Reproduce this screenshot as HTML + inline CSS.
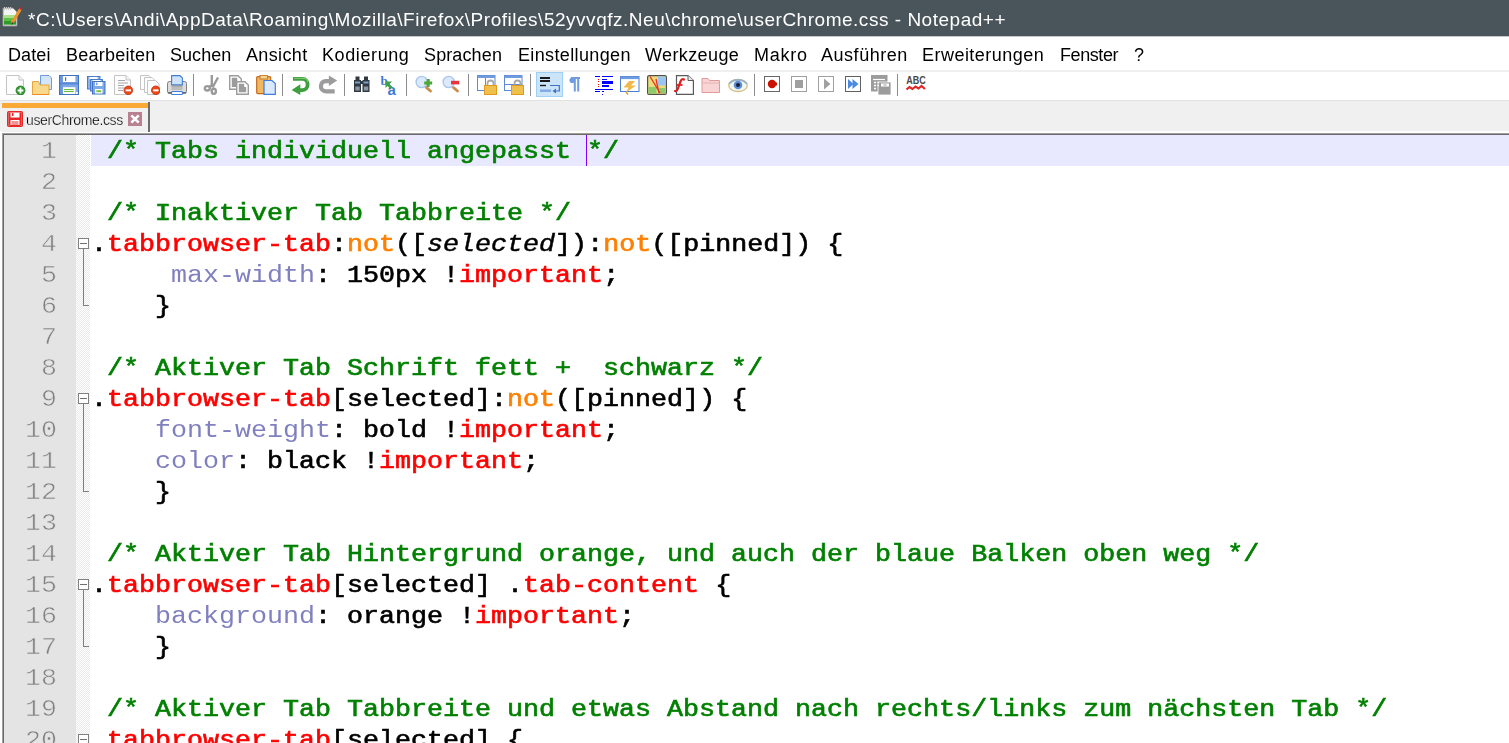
<!DOCTYPE html>
<html lang="de">
<head>
<meta charset="utf-8">
<title>userChrome.css - Notepad++</title>
<style>
html,body{margin:0;padding:0;}
body{width:1509px;height:743px;overflow:hidden;background:#fff;position:relative;font-family:"Liberation Sans",sans-serif;}
#title{position:absolute;left:0;top:0;width:1509px;height:36px;background:#4a545b;border-bottom:1px solid #c4c8cb;}
#title .t{will-change:transform;position:absolute;left:27.5px;top:7.5px;color:#fff;font-size:19px;line-height:24px;white-space:nowrap;letter-spacing:0.52px;}
#menu{position:absolute;left:0;top:37px;width:1509px;height:33px;background:#fff;}
#menu span{will-change:transform;position:absolute;top:7px;font-size:18px;line-height:22px;color:#000;white-space:nowrap;}
#tb{position:absolute;left:0;top:70px;width:1509px;height:30px;background:#fff;border-top:2px solid #f0f0f0;box-sizing:border-box;}
#tb .sep{position:absolute;top:2px;width:1px;height:22px;background:#8d8d8d;}
#tb svg{position:absolute;top:3px;width:20px;height:20px;}
#tabs{position:absolute;left:0;top:100px;width:1509px;height:31px;background:#f0f0f0;border-top:1px solid #e2e2e2;box-sizing:border-box;}
#tab{position:absolute;left:2px;top:2px;width:148px;height:29px;background:#f0f0f0;padding-top:5px;box-sizing:border-box;}
#tab:before{content:"";position:absolute;left:0;top:0;width:146px;height:5px;background:#faa836;}
#tab:after{content:"";position:absolute;left:146px;top:-1px;width:2px;height:30px;background:#6d6d6d;}
#tab .n{will-change:transform;-webkit-text-stroke:0.25px #f0f0f0;position:absolute;left:23.5px;top:8px;font-size:14px;letter-spacing:-0.36px;line-height:18px;color:#000;white-space:nowrap;}
#ed{position:absolute;left:2px;top:133px;width:1507px;height:610px;background:#fff;border-top:1px solid #a0a0a0;border-left:1px solid #a0a0a0;box-sizing:border-box;}
#ed2{position:absolute;left:0;top:0;width:1506px;height:609px;border-top:1px solid #696969;border-left:1px solid #696969;box-sizing:border-box;}
#lnm{position:absolute;left:0;top:0;width:72px;height:608px;background:#e4e4e4;}
#fm{position:absolute;left:72px;top:0;width:14px;height:608px;background:repeating-conic-gradient(#fff 0 25%,#e9e9e9 0 50%) 0 0/2px 2px;}
.fb{position:absolute;left:74px;width:11px;height:11px;box-sizing:border-box;border:1px solid #808080;background:#fff;}
.fb:after{content:"";position:absolute;left:1px;top:4px;width:7px;height:1px;background:#707070;}
.fl{position:absolute;left:79px;width:6px;border-left:1px solid #808080;border-bottom:1px solid #808080;box-sizing:border-box;}
#caret{position:absolute;left:582px;top:0;width:1px;height:31px;background:#8000ff;}
#cur{position:absolute;left:87px;top:0;width:1418px;height:31px;background:#e8e8ff;}
.ln{will-change:transform;position:absolute;left:0;width:53px;text-align:right;font-family:"Liberation Mono",monospace;font-size:23px;transform:scaleX(1.1594);transform-origin:100% 0;line-height:31px;height:31px;color:#808080;-webkit-text-stroke:0.55px #e4e4e4;}
.cl{will-change:transform;position:absolute;left:87px;height:31px;line-height:31px;font-family:"Liberation Mono",monospace;font-size:23px;letter-spacing:0px;transform:scaleX(1.1594);transform-origin:0 0;-webkit-text-stroke-width:0.6px;white-space:pre;color:#000;}
.cl i{-webkit-text-stroke-width:0.45px}.c{color:#008000}.r{color:#ff0000}.o{color:#ff8000}.p{color:#8080c0;-webkit-text-stroke-width:0}
</style>
</head>
<body>
<div id="title"><svg style="position:absolute;left:2px;top:6px;width:21px;height:21px" viewBox="0 0 21 21"><path d="M1 2H11L15 6V20H1Z" fill="#f4f4f4" stroke="#8a8a8a" stroke-width="1"/><path d="M2.5 1V4M4.500 1V4M6.500 1V4M8.500 1V4" stroke="#c8c8c8" stroke-width="1"/><rect x="2" y="9" width="12" height="9.500" fill="#5cc044"/><rect x="2" y="15" width="12" height="3.500" fill="#2f9a2a"/><rect x="2" y="9" width="12" height="3" fill="#a8e08c"/><path d="M18.500 3L10 17" stroke="#f0922c" stroke-width="3"/><path d="M19.300 1.500L18.200 3.500" stroke="#d02020" stroke-width="2"/><path d="M10.500 16L9 19L11.800 17.200Z" fill="#40382c"/></svg><span class="t">*C:\Users\Andi\AppData\Roaming\Mozilla\Firefox\Profiles\52yvvqfz.Neu\chrome\userChrome.css - Notepad++</span></div>
<div id="menu">
<span style="left:7.8px;letter-spacing:0.09px">Datei</span><span style="left:65.5px;letter-spacing:0.25px">Bearbeiten</span><span style="left:169.8px;letter-spacing:0.05px">Suchen</span><span style="left:245.8px;letter-spacing:0.36px">Ansicht</span><span style="left:322.3px;letter-spacing:0.60px">Kodierung</span><span style="left:424.0px;letter-spacing:0.12px">Sprachen</span><span style="left:517.5px;letter-spacing:0.36px">Einstellungen</span><span style="left:644.7px;letter-spacing:0.39px">Werkzeuge</span><span style="left:753.8px;letter-spacing:0.72px">Makro</span><span style="left:820.6px;letter-spacing:0.53px">Ausführen</span><span style="left:922.2px;letter-spacing:0.47px">Erweiterungen</span><span style="left:1060.0px;letter-spacing:-0.42px">Fenster</span><span style="left:1134px">?</span>
</div>
<div id="tb">
<div class="sep" style="left:193px"></div><div class="sep" style="left:282px"></div><div class="sep" style="left:344px"></div><div class="sep" style="left:406px"></div><div class="sep" style="left:468px"></div><div class="sep" style="left:530px"></div><div class="sep" style="left:754px"></div><div class="sep" style="left:897px"></div>
<!-- new -->
<svg style="left:6px" viewBox="0 0 20 20"><path d="M0.5 0.5H13L17.5 5V19.5H0.5Z" fill="#fdfdfd" stroke="#c4c4c4"/><path d="M13 0.5V5H17.5" fill="#f2f2f2" stroke="#c4c4c4"/><circle cx="14.5" cy="15.5" r="4.5" fill="#2e9a2e" stroke="#1f7a1f" stroke-width="0.8"/><path d="M14.5 12.6V18.4M11.6 15.5H17.4" stroke="#fff" stroke-width="1.8"/></svg>
<!-- open -->
<svg style="left:32px" viewBox="0 0 20 20"><path d="M8.5 0.5H17L19.5 3V14.5H8.5Z" fill="#d3e4fb" stroke="#6a9be0"/><path d="M0.5 6.5H6.5L8 10H17V19.5H0.5Z" fill="#f8d88a" stroke="#e6a63a"/><path d="M0.5 19.5H17" stroke="#f08a1c"/></svg>
<!-- save -->
<svg style="left:59px" viewBox="0 0 20 20"><rect x="0.500" y="0.500" width="19" height="19" fill="#7ea8e6" stroke="#3f72c4"/><rect x="1" y="1" width="2.500" height="18" fill="#6a98de"/><rect x="1" y="7.500" width="18" height="2" fill="#5a8ad8"/><rect x="4" y="1" width="12.400" height="6" fill="#fff"/><rect x="6" y="2.200" width="1.200" height="3.700" fill="#3f72c4"/><rect x="4" y="12.200" width="12.400" height="6.800" fill="#fff"/><rect x="5" y="14" width="9.800" height="1.100" fill="#6bbf3a"/><rect x="5" y="16" width="9.800" height="1.100" fill="#6bbf3a"/><rect x="17" y="17" width="1.800" height="1.900" fill="#fff"/></svg>
<!-- save all -->
<svg style="left:86px" viewBox="0 0 20 20"><rect x="1.500" y="1.500" width="12.500" height="12.500" fill="#8db2ea" stroke="#4a7bcc"/><rect x="3.500" y="2" width="8" height="2.500" fill="#fff"/><rect x="4.500" y="4.500" width="12" height="11.500" fill="#8db2ea" stroke="#4a7bcc"/><rect x="6.500" y="5" width="8" height="2" fill="#fff"/><rect x="6.500" y="6.500" width="12.500" height="12.500" fill="#7ea8e6" stroke="#3f72c4"/><rect x="9" y="7" width="7.500" height="4" fill="#fff"/><rect x="10.300" y="7.600" width="1" height="2.600" fill="#3f72c4"/><rect x="9" y="14" width="7.500" height="4.500" fill="#fff"/><rect x="10.300" y="15.200" width="5" height="2" fill="#7bc43c"/></svg>
<!-- close -->
<svg style="left:113px" viewBox="0 0 20 20"><path d="M1.5 0.5H13L17.5 5V19.5H1.5Z" fill="#fdfdfd" stroke="#c4c4c4"/><path d="M13 0.5V5H17.5" fill="#f2f2f2" stroke="#c4c4c4"/><path d="M5 5.5H12M5 8H15M5 10.5H11M5 13H11M5 15.5H10" stroke="#a8a8a8" stroke-width="1.1"/><circle cx="15.3" cy="15.3" r="4.3" fill="#e84a18" stroke="#c82a10" stroke-width="0.8"/><rect x="12.6" y="14.4" width="5.4" height="1.9" fill="#fff"/></svg>
<!-- close all -->
<svg style="left:140px" viewBox="0 0 20 20"><path d="M0.5 0.5H9L11 2.5V14.5H0.5Z" fill="#fdfdfd" stroke="#c4c4c4"/><path d="M4.5 2.5H12L14.5 5V17.5H4.5Z" fill="#fdfdfd" stroke="#c4c4c4"/><path d="M7.5 5.5H15.5L19 9V19.5H7.5Z" fill="#fdfdfd" stroke="#c4c4c4"/><circle cx="15.8" cy="15.3" r="4.3" fill="#e84a18" stroke="#c82a10" stroke-width="0.8"/><rect x="13.1" y="14.4" width="5.4" height="1.9" fill="#fff"/></svg>
<!-- print -->
<svg style="left:167px" viewBox="0 0 20 20"><rect x="0.500" y="6.500" width="19" height="12" rx="2" fill="#dcdcdc" stroke="#808080"/><rect x="1" y="17" width="18" height="1.400" fill="#6a6a6a"/><rect x="4.500" y="11" width="11" height="4" fill="#bcbcbc"/><rect x="4.500" y="10.300" width="11" height="1" fill="#8a8a8a"/><path d="M4.600 9.800V0.600H13L15.400 3V9.800Z" fill="#cfe3fc" stroke="#3f7fd8" stroke-width="1.100"/><rect x="4.600" y="16.500" width="10.800" height="3" rx="0.800" fill="#fafcff" stroke="#3f7fd8" stroke-width="1.100"/></svg>
<!-- cut -->
<svg style="left:203px" viewBox="0 0 20 20"><path d="M8.800 0V12M15 2.500L9.500 12.500" stroke="#9a9a9a" stroke-width="2.400" fill="none"/><ellipse cx="4.300" cy="13.300" rx="2.500" ry="2.200" fill="none" stroke="#9a9a9a" stroke-width="2.400"/><ellipse cx="10.800" cy="16.300" rx="2.100" ry="2.600" fill="none" stroke="#9a9a9a" stroke-width="2.400"/><path d="M6 12.200L10 10" stroke="#9a9a9a" stroke-width="2.600"/></svg>
<!-- copy -->
<svg style="left:229px" viewBox="0 0 20 20"><path d="M0.7 0.7H9L12.3 4V14.3H0.7Z" fill="#fff" stroke="#9c9c9c" stroke-width="1.4"/><path d="M2.8 2.8H8.2V6.5H10.2V12H2.8Z" fill="#9c9c9c"/><path d="M7.7 6.7H16L19.3 10V19.3H7.7Z" fill="#fff" stroke="#9c9c9c" stroke-width="1.4"/><path d="M9.8 8.8H15.2V12H17.2V17.3H9.8Z" fill="#9c9c9c"/></svg>
<!-- paste -->
<svg style="left:256px" viewBox="0 0 20 20"><rect x="0.7" y="1.7" width="14" height="17" rx="1" fill="#f0b860" stroke="#c06a20" stroke-width="1.2"/><rect x="4" y="0.5" width="7.5" height="3.5" fill="#f6d48c" stroke="#c06a20" stroke-width="0.8"/><path d="M8 5.5H16L19.3 8.5V19.3H8Z" fill="#dbe9fd" stroke="#3d7ee0" stroke-width="1.2"/></svg>
<!-- undo -->
<svg style="left:291px" viewBox="0 0 20 20"><path d="M2 3.900H11.500C18.300 3.900 18.300 15.200 11.500 15.200H8" fill="none" stroke="#3f9f3f" stroke-width="3.800"/><path d="M0.600 15L9.300 9.300V20Z" fill="#3f9f3f"/><path d="M3 3.300H12C15 3.300 16.500 5 16.800 7" fill="none" stroke="#86cc7a" stroke-width="1"/></svg>
<!-- redo -->
<svg style="left:318px" viewBox="0 0 20 20"><path d="M11.500 6.100H8C1.200 6.100 1.200 16.300 8 16.300H16.700" fill="none" stroke="#9c9c9c" stroke-width="4.200"/><path d="M19.200 5.600L10.900 0.600V11Z" fill="#9c9c9c"/></svg>
<!-- find -->
<svg style="left:353px" viewBox="0 0 20 20"><rect x="1" y="5" width="7" height="12" fill="#303840"/><rect x="9.500" y="5" width="7" height="12" fill="#303840"/><rect x="2.500" y="1.500" width="4" height="4" fill="#303840"/><rect x="11" y="1.500" width="4" height="4" fill="#303840"/><rect x="7" y="6" width="4" height="3" fill="#303840"/><rect x="2" y="6.500" width="5" height="2" fill="#7aa2c8"/><rect x="10.500" y="6.500" width="5" height="2" fill="#7aa2c8"/><rect x="2.300" y="11.500" width="4.400" height="4" fill="#8a98a6"/><rect x="10.800" y="11.500" width="4.400" height="4" fill="#8a98a6"/></svg>
<!-- replace -->
<svg style="left:380px" viewBox="0 0 20 20"><text x="0.500" y="9.500" font-family="Liberation Serif,serif" font-size="13" font-weight="bold" fill="#3f78d0">b</text><text x="7.500" y="19.500" font-family="Liberation Sans,sans-serif" font-size="15" font-weight="bold" fill="#3f78d0">a</text><path d="M5.500 6.500L12 6.500L9.500 9L12.500 12L10.500 14L7.500 11L5.500 13Z" fill="#3aa04a"/></svg>
<!-- zoom in -->
<svg style="left:415px" viewBox="0 0 20 20"><circle cx="6.700" cy="7" r="5.600" fill="#dce9fa" stroke="#a9c6ee" stroke-width="1.400"/><path d="M11.500 12.700L15.500 16" stroke="#c98a4a" stroke-width="2.800" stroke-linecap="round"/><path d="M13.200 4V12M9.200 8H17.200" stroke="#4aa83a" stroke-width="3"/></svg>
<!-- zoom out -->
<svg style="left:442px" viewBox="0 0 20 20"><circle cx="6.700" cy="7" r="5.600" fill="#dce9fa" stroke="#a9c6ee" stroke-width="1.400"/><path d="M11.500 12.700L15.500 16" stroke="#c98a4a" stroke-width="2.800" stroke-linecap="round"/><rect x="9" y="5.800" width="8.200" height="3.600" fill="#e8343a"/></svg>
<!-- sync v -->
<svg style="left:477px" viewBox="0 0 20 20"><rect x="0.5" y="0.5" width="17.5" height="15" fill="#fff" stroke="#5a8ad8"/><rect x="0.5" y="0.5" width="17.5" height="2.5" fill="#6f9ce0"/><path d="M8.5 3V15.5" stroke="#5a8ad8"/><path d="M10.5 11V8.5A3 3 0 0 1 16.5 8.500V11" fill="none" stroke="#a8a8a8" stroke-width="1.8"/><rect x="7.5" y="10.500" width="12" height="9" fill="#efc04c" stroke="#e09a20"/></svg>
<!-- sync h -->
<svg style="left:504px" viewBox="0 0 20 20"><rect x="0.500" y="0.500" width="17.500" height="15" fill="#fff" stroke="#5a8ad8"/><rect x="0.5" y="0.5" width="17.500" height="2.5" fill="#6f9ce0"/><path d="M0.5 9.500H18" stroke="#5a8ad8"/><path d="M10.500 11V8.500A3 3 0 0 1 16.5 8.5V11" fill="none" stroke="#a8a8a8" stroke-width="1.8"/><rect x="7.500" y="10.5" width="12" height="9" fill="#efc04c" stroke="#e09a20"/></svg>
<!-- wrap (active) -->
<div style="position:absolute;left:536px;top:0px;width:27px;height:25px;background:#cce4f7;border:1px solid #9fd0f5;box-sizing:border-box"></div>
<svg style="left:540px" viewBox="0 0 20 20"><path d="M0 3H10M0 6H10" stroke="#1a1a1a" stroke-width="1.8"/><path d="M0 10.500H6" stroke="#1a1a1a" stroke-width="1.4"/><rect x="0" y="14.500" width="11" height="2.400" fill="#7ea8e6"/><path d="M10 10.500H19.300V16H14" fill="none" stroke="#3f72c4" stroke-width="1.2"/><path d="M12.500 16L16 13.500V18.500Z" fill="#3f72c4"/></svg>
<!-- pilcrow -->
<svg style="left:566px" viewBox="0 0 20 20"><path d="M5 3H14M8.800 3V16.500M12.200 3V16.500" stroke="#6f9ce0" stroke-width="2" fill="none"/><circle cx="6.300" cy="5.300" r="2.800" fill="#6f9ce0"/></svg>
<!-- indent guide -->
<svg style="left:594px" viewBox="0 0 20 20" shape-rendering="crispEdges"><path d="M1 1.500H6M8 1.500H19" stroke="#0000ff" stroke-width="1"/><path d="M8 4.500H13" stroke="#0000ff" stroke-width="1"/><rect x="8" y="6" width="11" height="3" fill="#0000ff"/><rect x="8" y="10" width="7" height="2" fill="#0000ff"/><path d="M1 14.500H19" stroke="#0000ff" stroke-width="1"/><path d="M1 16.500H6M8 16.500H10" stroke="#0000ff" stroke-width="1"/><rect x="8" y="19" width="1" height="1" fill="#0000ff"/><path d="M4.500 4V13" stroke="#ff0000" stroke-width="1" stroke-dasharray="1 1.300"/></svg>
<!-- udl -->
<svg style="left:620px" viewBox="0 0 20 20"><rect x="0.500" y="1.500" width="18.500" height="15" fill="#fff" stroke="#4a80d8"/><rect x="0.500" y="1.500" width="18.500" height="2.600" fill="#6f9ce0"/><path d="M9 6L15 6L11 10.500L16 10.500L6 17.500L8.500 12.500L3.500 12.500Z" fill="#f0b848"/><path d="M6 17L8 19.500" stroke="#e0a030" stroke-width="1.500"/></svg>
<!-- doc map -->
<svg style="left:647px" viewBox="0 0 20 20"><rect x="0.600" y="0.600" width="18.800" height="18.800" rx="1.500" fill="#ecdc7c" stroke="#505050" stroke-width="1.200"/><rect x="11" y="1.500" width="7.500" height="9" fill="#9cc4f0"/><rect x="1.500" y="12" width="8" height="6.500" fill="#8ccc6c"/><rect x="12" y="13" width="6" height="5" fill="#8ccc6c"/><path d="M3 1.500L13 18M12 18L9 4" stroke="#e83020" stroke-width="1.300" fill="none"/></svg>
<!-- function list -->
<svg style="left:674px" viewBox="0 0 20 20"><path d="M2.500 0.600H14L19.400 5.500V19.400H2.500Z" fill="#fff" stroke="#5a5a5a" stroke-width="1.200"/><path d="M14 0.600V5.500H19.400" fill="#e8e8e8" stroke="#5a5a5a" stroke-width="1"/><path d="M1 16C3 16.500 4 14 4.800 11L6.500 6.500C7.300 4.500 8.500 3.500 10 4.500" fill="none" stroke="#e02020" stroke-width="2.200" stroke-linecap="round"/><path d="M2.500 10H8.500" stroke="#e02020" stroke-width="1.800"/></svg>
<!-- folder as workspace -->
<svg style="left:701px" viewBox="0 0 20 20"><path d="M1 3.500H7L8.500 5.500H18.500V17.500H1Z" fill="#f8d4d4" stroke="#e09a9a"/><path d="M1 8H18.500" stroke="#eab0b0"/></svg>
<!-- monitoring eye -->
<svg style="left:728px" viewBox="0 0 20 20"><ellipse cx="10" cy="10.500" rx="9.300" ry="6" fill="#f4f8ee" stroke="#d4c08c" stroke-width="1.300"/><path d="M1 9C5 3.500 15 3.500 19 9" fill="none" stroke="#9ab0c4" stroke-width="1.600"/><circle cx="10" cy="10" r="4.300" fill="#5a8ed8"/><circle cx="10" cy="10" r="2" fill="#182030"/></svg>
<!-- record -->
<svg style="left:763px" viewBox="0 0 20 20"><rect x="1.500" y="1.500" width="15" height="15" fill="#fff" stroke="#686868" stroke-width="1"/><circle cx="9" cy="9" r="4.200" fill="#cc1100"/><rect x="11" y="7.500" width="3" height="3" fill="#cc1100"/></svg>
<!-- stop -->
<svg style="left:790px" viewBox="0 0 20 20"><rect x="1.500" y="1.500" width="15" height="15" fill="#fff" stroke="#a0a0a0" stroke-width="1"/><rect x="5" y="5" width="8" height="8" fill="#a0a0a0"/></svg>
<!-- play -->
<svg style="left:817px" viewBox="0 0 20 20"><rect x="1.500" y="1.500" width="15" height="15" fill="#fff" stroke="#a0a0a0" stroke-width="1"/><path d="M7 3.500L13.500 9L7 14.500Z" fill="#a0a0a0"/></svg>
<!-- play multi -->
<svg style="left:844px" viewBox="0 0 20 20"><rect x="1.500" y="1.500" width="15" height="15" fill="#fff" stroke="#606060" stroke-width="1"/><path d="M4 4L9.500 9L4 14Z" fill="#4a8ae0"/><path d="M8.500 4L14.500 9L8.500 14Z" fill="#4a8ae0"/></svg>
<!-- save macro -->
<svg style="left:871px" viewBox="0 0 20 20"><rect x="0" y="0" width="16.500" height="16.500" fill="#9c9c9c"/><rect x="7" y="7" width="13" height="13" fill="#9c9c9c" stroke="#fff" stroke-width="0.800"/><path d="M2 4.500H14" stroke="#fff" stroke-width="1.200"/><path d="M3 7.500H5M3 10.500H5M3 13.500H5M6.500 7.500H8M6.500 10.500H8" stroke="#fff" stroke-width="1.400"/><rect x="10" y="8.500" width="8" height="3" fill="#fff"/><rect x="12.500" y="9.500" width="3" height="1" fill="#9c9c9c"/></svg>
<!-- spell check -->
<svg style="left:906px" viewBox="0 0 20 20"><text x="10" y="9.300" text-anchor="middle" font-family="Liberation Sans,sans-serif" font-size="11.500" font-weight="bold" fill="#484848" textLength="19.500" lengthAdjust="spacingAndGlyphs">ABC</text><path d="M0.500 14.500L3.500 12L6.500 14L9.500 11.500L12.500 13.500L15.500 11L19 14" fill="none" stroke="#e02828" stroke-width="2.200"/></svg>
</div>
<div id="tabs"><div id="tab"><svg style="position:absolute;left:5px;top:8px;width:16px;height:16px" viewBox="0 0 16 16"><rect x="0.75" y="0.75" width="14.5" height="14.5" rx="1" fill="#fff" stroke="#e82828" stroke-width="1.5"/><rect x="1.5" y="1.5" width="2" height="13" fill="#e82828"/><rect x="12.500" y="1.500" width="2" height="13" fill="#e82828"/><rect x="3" y="6.500" width="10" height="2.500" fill="#e82828"/><rect x="5" y="2" width="1.500" height="3" fill="#e82828"/><rect x="4.500" y="10.500" width="7" height="1" fill="#e82828"/><rect x="4.500" y="12.500" width="7" height="1" fill="#e82828"/><rect x="3" y="14" width="10" height="1.300" fill="#e82828"/></svg><svg style="position:absolute;left:126px;top:9px;width:14px;height:14px" viewBox="0 0 14 14"><rect width="14" height="14" fill="#b8818f"/><path d="M3.300 3.300L10.700 10.700M10.700 3.300L3.300 10.700" stroke="#fff" stroke-width="2.600"/></svg><span class="n">userChrome.css</span></div></div>
<div id="ed"><div id="ed2">
<div id="lnm"></div><div id="fm"></div><div id="cur"></div><div id="caret"></div>
<div class="fb" style="top:103px"></div><div class="fl" style="top:114px;height:57px"></div><div class="fb" style="top:258px"></div><div class="fl" style="top:269px;height:88px"></div><div class="fb" style="top:444px"></div><div class="fl" style="top:455px;height:57px"></div><div class="fb" style="top:599px"></div><div class="fl" style="top:610px;height:150px"></div>
<!--LINES-->
<div class="ln" style="top:2px">1</div>
<div class="cl" style="top:2px"><span class="c"> /* Tabs individuell angepasst */</span></div>
<div class="ln" style="top:33px">2</div>
<div class="ln" style="top:64px">3</div>
<div class="cl" style="top:64px"><span class="c"> /* Inaktiver Tab Tabbreite */</span></div>
<div class="ln" style="top:95px">4</div>
<div class="cl" style="top:95px">.<span class="r">tabbrowser-tab</span>:<span class="o">not</span>([<i>selected</i>]):<span class="o">not</span>([pinned]) {</div>
<div class="ln" style="top:126px">5</div>
<div class="cl" style="top:126px">     <span class="p">max-width</span>: 150px !<span class="r">important</span>;</div>
<div class="ln" style="top:157px">6</div>
<div class="cl" style="top:157px">    }</div>
<div class="ln" style="top:188px">7</div>
<div class="ln" style="top:219px">8</div>
<div class="cl" style="top:219px"><span class="c"> /* Aktiver Tab Schrift fett +  schwarz */</span></div>
<div class="ln" style="top:250px">9</div>
<div class="cl" style="top:250px">.<span class="r">tabbrowser-tab</span>[selected]:<span class="o">not</span>([pinned]) {</div>
<div class="ln" style="top:281px">10</div>
<div class="cl" style="top:281px">    <span class="p">font-weight</span>: bold !<span class="r">important</span>;</div>
<div class="ln" style="top:312px">11</div>
<div class="cl" style="top:312px">    <span class="p">color</span>: black !<span class="r">important</span>;</div>
<div class="ln" style="top:343px">12</div>
<div class="cl" style="top:343px">    }</div>
<div class="ln" style="top:374px">13</div>
<div class="ln" style="top:405px">14</div>
<div class="cl" style="top:405px"><span class="c"> /* Aktiver Tab Hintergrund orange, und auch der blaue Balken oben weg */</span></div>
<div class="ln" style="top:436px">15</div>
<div class="cl" style="top:436px">.<span class="r">tabbrowser-tab</span>[selected] .<span class="r">tab-content</span> {</div>
<div class="ln" style="top:467px">16</div>
<div class="cl" style="top:467px">    <span class="p">background</span>: orange !<span class="r">important</span>;</div>
<div class="ln" style="top:498px">17</div>
<div class="cl" style="top:498px">    }</div>
<div class="ln" style="top:529px">18</div>
<div class="ln" style="top:560px">19</div>
<div class="cl" style="top:560px"><span class="c"> /* Aktiver Tab Tabbreite und etwas Abstand nach rechts/links zum nächsten Tab */</span></div>
<div class="ln" style="top:591px">20</div>
<div class="cl" style="top:591px">.<span class="r">tabbrowser-tab</span>[selected] {</div>
<!--/LINES-->
</div></div>
</body>
</html>
